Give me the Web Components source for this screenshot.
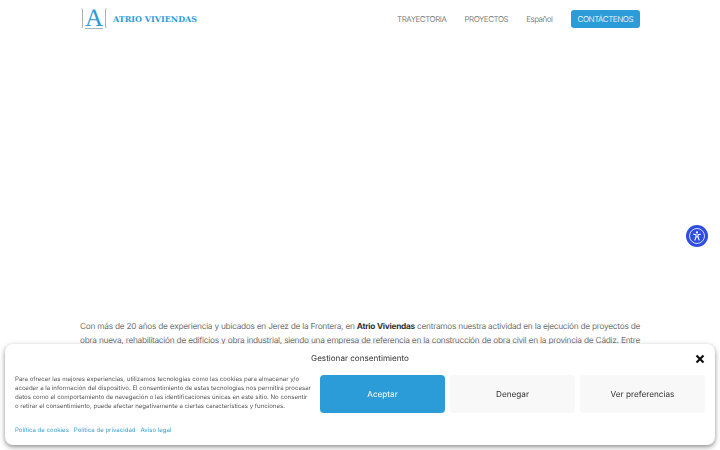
<!DOCTYPE html>
<html lang="es">
<head>
<meta charset="utf-8">
<title>Atrio Viviendas</title>
<style>
  html, body { margin: 0; height: 100%; overflow: hidden; background: #fff; }
  body {
    font-family: "Inter", "Liberation Sans", sans-serif;
    color: #666;
    text-rendering: geometricPrecision;
  }
  page-intro div { text-align: justify; text-align-last: justify; white-space: nowrap; }
  page-intro b { color: #333; }
</style>
</head>
<body>
<site-header>
  <nav-link>TRAYECTORIA</nav-link>
  <nav-link>PROYECTOS</nav-link>
  <nav-link>Español</nav-link>
  <nav-link button>CONTÁCTENOS</nav-link>
</site-header>
<page-intro>
  <div>Con más de 20 años de experiencia y ubicados en Jerez de la Frontera, en <b>Atrio Viviendas</b> centramos nuestra actividad en la ejecución de proyectos de</div>
  <div>obra nueva, rehabilitación de edificios y obra industrial, siendo una empresa de referencia en la construcción de obra civil en la provincia de Cádiz. Entre</div>
</page-intro>
<a11y-button></a11y-button>
<consent-banner>
  <span slot="title">Gestionar consentimiento</span>
  Para ofrecer las mejores experiencias, utilizamos tecnologías como las cookies para almacenar y/o acceder a la información del dispositivo. El consentimiento de estas tecnologías nos permitirá procesar datos como el comportamiento de navegación o las identificaciones únicas en este sitio. No consentir o&nbsp;retirar el consentimiento, puede afectar negativamente a ciertas características y funciones.
</consent-banner>

<script>
customElements.define("site-header", class extends HTMLElement {
  connectedCallback() {
    const shadow = this.attachShadow({mode: "open"});
    shadow.innerHTML = `
      <style>
        :host {
          display: flex;
          align-items: center;
          justify-content: space-between;
          height: 37px;
          padding: 0 80px 0 81px;
        }
        #logo {
          display: flex;
          align-items: center;
          gap: 6px;
          color: #2b9cd8;
        }
        #mark {
          position: relative;
          width: 26px;
          height: 22px;
          display: flex;
          justify-content: center;
        }
        #mark svg { position: absolute; left: 0; top: 0; }
        #letter {
          font: 25px/21px "Liberation Serif", serif;
          color: #2b9cd8;
        }
        #name {
          font: bold 8px "DejaVu Serif", serif;
          white-space: nowrap;
        }
        #nav { display: flex; align-items: center; gap: 18px; }
      </style>
      <div id="logo">
        <div id="mark">
          <svg width="26" height="22" viewBox="0 0 26 22" fill="none" stroke="#a9b2b8">
            <path d="M1.5 1V19.5H.5M.5 1H1.5M24.5 1V19.5H25.5M25.5 1H24.5M4 20.5H22"/>
          </svg>
          <span id="letter">A</span>
        </div>
        <span id="name">ATRIO VIVIENDAS</span>
      </div>
      <div id="nav"><slot></slot></div>
    `;
  }
});

customElements.define("nav-link", class extends HTMLElement {
  connectedCallback() {
    const shadow = this.attachShadow({mode: "open"});
    shadow.innerHTML = `
      <style>
        :host {
          display: block;
          font-size: 8px;
          font-weight: 300;
          letter-spacing: -.45px;
          color: #666;
          white-space: nowrap;
        }
        :host([button]) {
          background: #2b9cd8;
          color: #fff;
          padding: 5px 7px;
          border-radius: 3px;
          line-height: 8px;
        }
      </style>
      <slot></slot>
    `;
  }
});

customElements.define("page-intro", class extends HTMLElement {
  connectedCallback() {
    const shadow = this.attachShadow({mode: "open"});
    shadow.innerHTML = `
      <style>
        :host {
          display: block;
          margin: 284px 80px 0;
          font-size: 8.3px;
          letter-spacing: -.28px;
          line-height: 13.5px;
          color: #707070;
        }
      </style>
      <slot></slot>
    `;
  }
});

customElements.define("a11y-button", class extends HTMLElement {
  connectedCallback() {
    const shadow = this.attachShadow({mode: "open"});
    shadow.innerHTML = `
      <style>
        :host {
          position: fixed;
          left: 686px;
          top: 225px;
          width: 22px;
          height: 22px;
          border-radius: 50%;
          background: #2f4ee0;
        }
        svg { display: block; }
      </style>
      <svg width="22" height="22" viewBox="0 0 22 22" fill="none">
        <circle cx="11" cy="11" r="7.5" stroke="#fff" stroke-width="0.8"/>
        <circle cx="11" cy="7.4" r="1.1" fill="#fff"/>
        <path d="M7.6 9.2L10 9.8V12L8.9 15M14.4 9.2L12 9.8V12L13.1 15M10 12H12" stroke="#fff" stroke-width="1.1" stroke-linecap="round"/>
      </svg>
    `;
  }
});

customElements.define("consent-banner", class extends HTMLElement {
  connectedCallback() {
    const shadow = this.attachShadow({mode: "open"});
    shadow.innerHTML = `
      <style>
        :host {
          position: fixed;
          left: 5px;
          top: 344px;
          width: 710px;
          height: 101px;
          box-sizing: border-box;
          background: #fff;
          border-radius: 8px;
          box-shadow: 0 2px 5px rgba(0,0,0,.45);
          padding: 8px 10px 0;
          display: grid;
          grid-template-columns: 300px 1fr;
          grid-template-rows: 12px 38px 1fr;
          column-gap: 5px;
          row-gap: 11px;
          color: #333;
        }
        #head {
          grid-column: 1 / 3;
          display: flex;
          justify-content: center;
          font-size: 8.1px;
          line-height: 12px;
          position: relative;
        }
        #close { position: absolute; right: 0; top: 2px; }
        #text {
          font-size: 6.08px;
          line-height: 9px;
          color: #555;
        }
        #buttons {
          display: grid;
          grid-template-columns: repeat(3, 1fr);
          gap: 5px;
        }
        .btn {
          display: flex;
          align-items: center;
          justify-content: center;
          border-radius: 4px;
          background: #f8f8f8;
          font-size: 8.2px;
          color: #333;
        }
        .btn.primary { background: #2b9cd8; color: #fff; }
        #links {
          grid-column: 1 / 3;
          display: flex;
          gap: 5px;
          font-size: 6.08px;
          color: #3a9fd0;
          padding-top: 3px;
        }
      </style>
      <div id="head">
        <slot name="title"></slot>
        <svg id="close" width="10" height="10" viewBox="0 0 10 10" stroke="#111" stroke-width="2.2">
          <path d="M1.5 1.5L8.5 8.5M8.5 1.5L1.5 8.5"/>
        </svg>
      </div>
      <div id="text"><slot></slot></div>
      <div id="buttons">
        <div class="btn primary">Aceptar</div>
        <div class="btn">Denegar</div>
        <div class="btn">Ver preferencias</div>
      </div>
      <div id="links">
        <span>Política de cookies</span>
        <span>Política de privacidad</span>
        <span>Aviso legal</span>
      </div>
    `;
  }
});
</script>
</body>
</html>
